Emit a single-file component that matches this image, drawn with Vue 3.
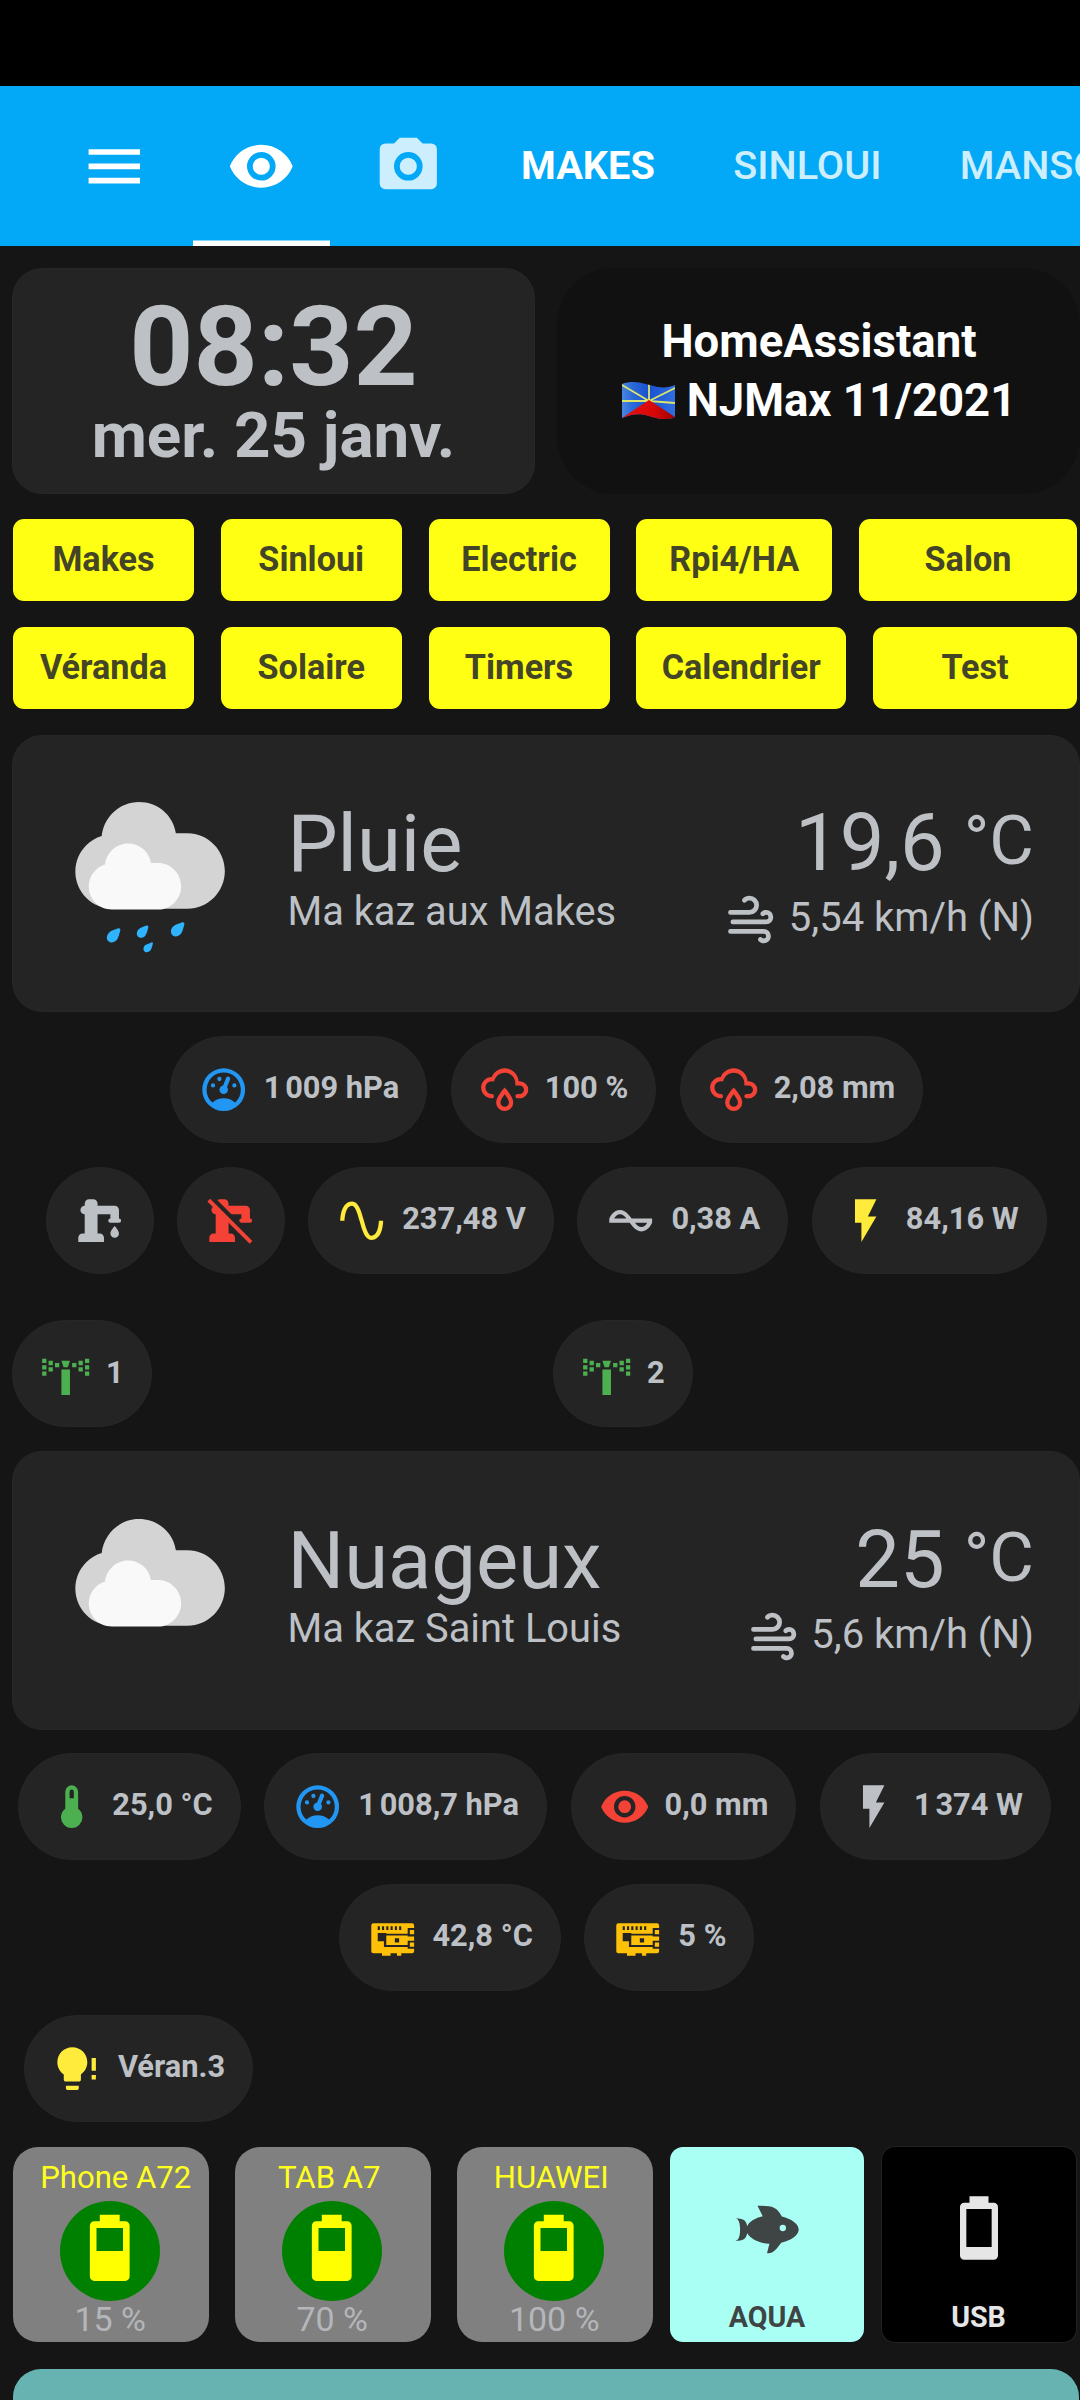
<script setup>
const icons = {
  menu: 'M3,6H21V8H3V6M3,11H21V13H3V11M3,16H21V18H3V16Z',
  eye: 'M12,9A3,3 0 0,0 9,12A3,3 0 0,0 12,15A3,3 0 0,0 15,12A3,3 0 0,0 12,9M12,17A5,5 0 0,1 7,12A5,5 0 0,1 12,7A5,5 0 0,1 17,12A5,5 0 0,1 12,17M12,4.5C7,4.5 2.73,7.61 1,12C2.73,16.39 7,19.5 12,19.5C17,19.5 21.27,16.39 23,12C21.27,7.61 17,4.5 12,4.5Z',
  camera: 'M4,4H7L9,2H15L17,4H20A2,2 0 0,1 22,6V18A2,2 0 0,1 20,20H4A2,2 0 0,1 2,18V6A2,2 0 0,1 4,4M12,7A5,5 0 0,0 7,12A5,5 0 0,0 12,17A5,5 0 0,0 17,12A5,5 0 0,0 12,7M12,9A3,3 0 0,1 15,12A3,3 0 0,1 12,15A3,3 0 0,1 9,12A3,3 0 0,1 12,9Z',
  windy: 'M4,10A1,1 0 0,1 3,9A1,1 0 0,1 4,8H12A2,2 0 0,0 14,6A2,2 0 0,0 12,4C11.45,4 10.95,4.22 10.59,4.59C10.2,5 9.56,5 9.17,4.59C8.78,4.2 8.78,3.56 9.17,3.17C9.9,2.45 10.9,2 12,2A4,4 0 0,1 16,6A4,4 0 0,1 12,10H4M19,12A1,1 0 0,0 20,11A1,1 0 0,0 19,10C18.72,10 18.47,10.11 18.29,10.29C17.9,10.68 17.27,10.68 16.88,10.29C16.5,9.9 16.5,9.27 16.88,8.88C17.42,8.34 18.17,8 19,8A3,3 0 0,1 22,11A3,3 0 0,1 19,14H5A1,1 0 0,1 4,13A1,1 0 0,1 5,12H19M18,18H4A1,1 0 0,1 3,17A1,1 0 0,1 4,16H18A3,3 0 0,1 21,19A3,3 0 0,1 18,22C17.17,22 16.42,21.66 15.88,21.12C15.5,20.73 15.5,20.1 15.88,19.71C16.27,19.32 16.9,19.32 17.29,19.71C17.47,19.89 17.72,20 18,20A1,1 0 0,0 19,19A1,1 0 0,0 18,18Z',
  gauge: 'M12,2A10,10 0 0,0 2,12A10,10 0 0,0 12,22A10,10 0 0,0 22,12A10,10 0 0,0 12,2M12,4A8,8 0 0,1 20,12C20,14.4 19,16.5 17.3,18C15.9,16.7 14,16 12,16C10,16 8.2,16.7 6.7,18C5,16.5 4,14.4 4,12A8,8 0 0,1 12,4M14,5.89C13.62,5.9 13.26,6.15 13.1,6.54L11.81,9.77L11.71,10C11,10.13 10.41,10.6 10.14,11.26C9.73,12.29 10.23,13.45 11.26,13.86C12.29,14.27 13.45,13.77 13.86,12.74C14.12,12.08 14,11.32 13.57,10.76L13.67,10.5L14.96,7.29L14.97,7.26C15.17,6.75 14.92,6.17 14.41,5.96C14.28,5.91 14.15,5.89 14,5.89M10,6A1,1 0 0,0 9,7A1,1 0 0,0 10,8A1,1 0 0,0 11,7A1,1 0 0,0 10,6M7,9A1,1 0 0,0 6,10A1,1 0 0,0 7,11A1,1 0 0,0 8,10A1,1 0 0,0 7,9M17,9A1,1 0 0,0 16,10A1,1 0 0,0 17,11A1,1 0 0,0 18,10A1,1 0 0,0 17,9Z',
  rainy: 'M6,14.03A1,1 0 0,1 7,15.03C7,15.58 6.55,16.03 6,16.03C3.24,16.03 1,13.79 1,11.03C1,8.27 3.24,6.03 6,6.03C7,3.68 9.3,2.03 12,2.03C15.43,2.03 18.24,4.69 18.5,8.06L19,8.03A4,4 0 0,1 23,12.03C23,14.23 21.21,16.03 19,16.03H18C17.45,16.03 17,15.58 17,15.03C17,14.47 17.45,14.03 18,14.03H19A2,2 0 0,0 21,12.03A2,2 0 0,0 19,10.03H17V9.03C17,6.27 14.76,4.03 12,4.03C9.5,4.03 7.45,5.84 7.06,8.21C6.73,8.09 6.37,8.03 6,8.03A3,3 0 0,0 3,11.03A3,3 0 0,0 6,14.03M12,14.15C12.18,14.39 12.37,14.66 12.56,14.94C13,15.56 14,17.03 14,18C14,19.11 13.1,20 12,20A2,2 0 0,1 10,18C10,17.03 11,15.56 11.44,14.94C11.63,14.66 11.82,14.4 12,14.15M12,11.03L11.5,11.59C11.5,11.59 10.65,12.55 9.79,13.81C8.93,15.06 8,16.56 8,18A4,4 0 0,0 12,22A4,4 0 0,0 16,18C16,16.56 15.07,15.06 14.21,13.81C13.35,12.55 12.5,11.59 12.5,11.59L12,11.03Z',
  pump: 'M19,14.5C19,14.5 21,16.67 21,18A2,2 0 0,1 19,20A2,2 0 0,1 17,18C17,16.67 19,14.5 19,14.5M5,18V9A2,2 0 0,1 3,7A2,2 0 0,1 5,5V4A2,2 0 0,1 7,2H9A2,2 0 0,1 11,4V5H19A2,2 0 0,1 21,7V9L21,11A1,1 0 0,1 22,12A1,1 0 0,1 21,13H17A1,1 0 0,1 16,12A1,1 0 0,1 17,11V9H11V18H12A2,2 0 0,1 14,20V22H2V20A2,2 0 0,1 4,18H5Z',
  pumpBody: 'M5,18V9A2,2 0 0,1 3,7A2,2 0 0,1 5,5V4A2,2 0 0,1 7,2H9A2,2 0 0,1 11,4V5H19A2,2 0 0,1 21,7V9L21,11A1,1 0 0,1 22,12A1,1 0 0,1 21,13H17A1,1 0 0,1 16,12A1,1 0 0,1 17,11V9H11V18H12A2,2 0 0,1 14,20V22H2V20A2,2 0 0,1 4,18H5Z',
  sine: 'M16.5,21C13.5,21 12.31,16.76 11.05,12.28C10.14,9.04 9,5 7.5,5C4.11,5 4,11.93 4,12H2C2,11.63 2.06,3 7.5,3C10.5,3 11.71,7.25 12.97,11.74C13.83,14.8 15,19 16.5,19C19.94,19 20.03,12.07 20.03,12H22.03C22.03,12.37 21.97,21 16.5,21Z',
  ac: 'M12.43 11C12.28 10.84 10 7 7 7S2.32 10.18 2 11V13H11.57C11.72 13.16 14 17 17 17S21.68 13.82 22 13V11H12.43M7 9C8.17 9 9.18 9.85 10 11H4.31C4.78 10.17 5.54 9 7 9M17 15C15.83 15 14.82 14.15 14 13H19.69C19.22 13.83 18.46 15 17 15Z',
  flash: 'M7,2V13H10V22L17,10H13L17,2H7Z',
  sprinkler: 'M1,5H3V7H1ZM1,8H3V10H1ZM1,11H3V13H1ZM4,6H6V8H4ZM4,9H6V11H4ZM7,7H9V9H7ZM21,5H23V7H21ZM21,8H23V10H21ZM21,11H23V13H21ZM18,6H20V8H18ZM18,9H20V11H18ZM15,7H17V9H15ZM10,6H14L13,9H11ZM10,10H14V22H10Z',
  thermometer: 'M15 13V5A3 3 0 0 0 9 5V13A5 5 0 1 0 15 13M12 4A1 1 0 0 1 13 5V8H11V5A1 1 0 0 1 12 4Z',
  bulb: 'M9.5 2C5.6 2 2.5 5.1 2.5 9C2.5 11.4 3.7 13.5 5.5 14.7V17C5.5 17.6 5.9 18 6.5 18H12.5C13.1 18 13.5 17.6 13.5 17V14.7C15.3 13.4 16.5 11.3 16.5 9C16.5 5.1 13.4 2 9.5 2M6.5 20V21C6.5 21.6 6.9 22 7.5 22H11.5C12.1 22 12.5 21.6 12.5 21V20H6.5M18.5 7V13H20.5V7H18.5M18.5 15V17H20.5V15H18.5Z',
  board: 'M3,5.3H21A1,1 0 0 1 22,6.3V7.5H19V10.2H9V9.8H5V13.7H7.9V16.4H19V17.2H22V18.3A1,1 0 0 1 21,19.3H16V20.4H14V19.3H11V20.4H7V19.3H3A1,1 0 0 1 2,18.3V6.3A1,1 0 0 1 3,5.3M5,6.7V8.4H6V6.7ZM7,6.7V8.4H8V6.7ZM9,6.7V8.4H10V6.7ZM11,6.7V8.4H12V6.7ZM13,6.7V8.4H14V6.7ZM15,6.7V8.4H16V6.7ZM20,8.4H22V10.4H20ZM20,14.2H22V16.2H20ZM9,11H19V11.4H22V13.4H19V15.4H9ZM13,12.3V14.3H15V12.3Z',
  fish: 'M12,20L12.76,17C9.5,16.79 6.59,15.4 5.75,13.58C5.66,14.06 5.53,14.5 5.33,14.83C4.67,16 3.33,16 2,16C3.1,16 3.5,14.43 3.5,12.5C3.5,10.57 3.1,9 2,9C3.33,9 4.67,9 5.33,10.17C5.53,10.5 5.66,10.94 5.75,11.42C6.4,10 8.32,8.85 10.66,8.32L9,5C11,5 13,5 14.33,5.67C15.46,6.23 16.11,7.27 16.69,8.38C19.61,9.08 22,10.66 22,12.5C22,14.38 19.5,16 16.5,16.66C15.67,17.76 14.86,18.78 14.17,19.33C13.33,20 12.67,20 12,20M17,11A1,1 0 0,0 16,12A1,1 0 0,0 17,13A1,1 0 0,0 18,12A1,1 0 0,0 17,11Z',
  battery50: 'M16,13H8V6H16M16.67,4H15V2H9V4H7.33A1.33,1.33 0 0,0 6,5.33V20.67C6,21.4 6.6,22 7.33,22H16.67A1.33,1.33 0 0,0 18,20.67V5.33C18,4.6 17.4,4 16.67,4Z',
  battery10: 'M16,18H8V6H16M16.67,4H15V2H9V4H7.33A1.33,1.33 0 0,0 6,5.33V20.67C6,21.4 6.6,22 7.33,22H16.67A1.33,1.33 0 0,0 18,20.67V5.33C18,4.6 17.4,4 16.67,4Z',
}

const buttonRows = [
  [
    { label: 'Makes', w: 181 }, { label: 'Sinloui', w: 181 }, { label: 'Electric', w: 181 },
    { label: 'Rpi4/HA', w: 196 }, { label: 'Salon', w: 218 },
  ],
  [
    { label: 'Véranda', w: 181 }, { label: 'Solaire', w: 181 }, { label: 'Timers', w: 181 },
    { label: 'Calendrier', w: 210 }, { label: 'Test', w: 204 },
  ],
]

const chipsMakes = [
  { icon: 'gauge', color: 'blue', text: '1\u202f009 hPa' },
  { icon: 'rainy', color: 'red', text: '100 %' },
  { icon: 'rainy', color: 'red', text: '2,08 mm' },
]
const chipsElectric = [
  { icon: 'pump', color: 'grey' },
  { icon: 'pumpBody', color: 'red', off: true },
  { icon: 'sine', color: 'yellow', text: '237,48 V' },
  { icon: 'ac', color: 'grey', text: '0,38 A' },
  { icon: 'flash', color: 'yellow', text: '84,16 W' },
]
const chipsSprinkler = [
  { icon: 'sprinkler', color: 'green', text: '1' },
  { icon: 'sprinkler', color: 'green', text: '2' },
]
const chipsLouis = [
  { icon: 'thermometer', color: 'green', text: '25,0 °C' },
  { icon: 'gauge', color: 'blue', text: '1\u202f008,7 hPa' },
  { icon: 'eye', color: 'red', text: '0,0 mm' },
  { icon: 'flash', color: 'grey', text: '1\u202f374 W' },
  { icon: 'board', color: 'amber', text: '42,8 °C' },
  { icon: 'board', color: 'amber', text: '5 %' },
]
const chipsVeranda = [{ icon: 'bulb', color: 'yellow', text: 'Véran.3' }]

const chipGroups = {
  top: [
    { name: 'makes', chips: chipsMakes },
    { name: 'electric', chips: chipsElectric },
    { name: 'sprinkler', chips: chipsSprinkler },
  ],
  bottom: [
    { name: 'louis', chips: chipsLouis },
    { name: 'veranda', chips: chipsVeranda },
  ],
}

const sections = [
  { key: 'makes', state: 'Pluie', name: 'Ma kaz aux Makes', temp: '19,6', wind: '5,54 km/h (N)', rain: true, groups: chipGroups.top },
  { key: 'louis', state: 'Nuageux', name: 'Ma kaz Saint Louis', temp: '25', wind: '5,6 km/h (N)', rain: false, groups: chipGroups.bottom },
]

const batteries = [
  { name: 'Phone A72', level: '15 %' },
  { name: 'TAB A7', level: '70 %' },
  { name: 'HUAWEI', level: '100 %' },
]
</script>

<template>
  <div class="app">
    <div class="statusbar"></div>
    <header class="toolbar">
      <svg class="ico-24 menu" viewBox="0 0 24 24"><path :d="icons.menu" /></svg>
      <nav class="tabs">
        <div class="tab active"><svg class="ico-24" viewBox="0 0 24 24"><path :d="icons.eye" /></svg></div>
        <div class="tab dim"><svg class="ico-24" viewBox="0 0 24 24"><path :d="icons.camera" /></svg></div>
        <div class="tab strong">MAKES</div>
        <div class="tab dim">SINLOUI</div>
        <div class="tab dim">MANSON</div>
      </nav>
    </header>

    <main class="view">
      <section class="top-row">
        <div class="card clock">
          <div class="time">08:32</div>
          <div class="date">mer. 25 janv.</div>
        </div>
        <div class="about">
          <div>HomeAssistant</div>
          <div class="about-line">
            <svg class="flag" viewBox="0 0 53 37">
              <defs>
                <clipPath id="flagShape"><path d="M0,2 C14,-3 24,3 36,5 C43,6 48,5 53,3 V35 C45,39 36,37 27,34 C18,31 9,32 0,36 Z" /></clipPath>
                <linearGradient id="flagBlue" x1="0" x2="1">
                  <stop offset="0" stop-color="#4a86e0" /><stop offset=".2" stop-color="#2a6ad8" />
                  <stop offset=".5" stop-color="#1a50d0" /><stop offset="1" stop-color="#2f6fe0" />
                </linearGradient>
                <linearGradient id="flagRed" x1="0" x2="1">
                  <stop offset="0" stop-color="#e81010" /><stop offset=".6" stop-color="#d80808" /><stop offset="1" stop-color="#a00000" />
                </linearGradient>
              </defs>
              <g clip-path="url(#flagShape)">
                <rect width="53" height="37" fill="url(#flagBlue)" />
                <g stroke="#dbe56a" stroke-width="1.8">
                  <path d="M27,19 L0,3 M27,19 L0,19 M27,19 V0 M27,19 L53,6 M27,19 L53,21" />
                </g>
                <path d="M0,36 L27,18 L53,35 V40 H0 Z" fill="url(#flagRed)" />
              </g>
            </svg>
            <span>NJMax 11/2021</span>
          </div>
        </div>
      </section>

      <section class="buttons">
        <div v-for="(row, r) in buttonRows" :key="r" class="button-row">
          <div v-for="b in row" :key="b.label" class="btn" :style="{ width: b.w + 'px' }">{{ b.label }}</div>
        </div>
      </section>

      <template v-for="s in sections" :key="s.key">
        <section class="card weather" :class="s.key">
          <svg class="weather-icon" viewBox="0 0 17 17">
            <path fill="#d4d4d4" d="m3.8863 5.035c-0.54892 0.16898-1.04 0.46637-1.4372 0.8636-0.63077 0.63041-1.0206 1.4933-1.0206 2.455 0 1.9251 1.5589 3.4682 3.4837 3.4682h6.9688c1.9251 0 3.484-1.5981 3.484-3.5232 0-1.9251-1.5589-3.5232-3.484-3.5232h-1.0834c-0.25294-1.6916-1.6986-2.9083-3.4463-2.9083-1.7995 0-3.2805 1.4153-3.465 3.1679z" />
            <path fill="#f9f9f9" d="m4.1996 7.6995c-0.33902 0.10407-0.64276 0.28787-0.88794 0.5334-0.39017 0.38982-0.63147 0.92322-0.63147 1.5176 0 1.1896 0.96414 2.1431 2.1537 2.1431h4.3071c1.1896 0 2.153-0.98742 2.153-2.1777 0-1.1896-0.96344-2.1777-2.153-2.1777h-0.66992c-0.15593-1.0449-1.0499-1.7974-2.1297-1.7974-1.112 0-2.0274 0.87524-2.1417 1.9586z" />
            <g v-if="s.rain" fill="#30b3ff">
              <path id="drop" d="m5.2852 14.734c-0.22401 0.24765-0.57115 0.2988-0.77505 0.11395-0.20391-0.1845-0.18732-0.53481 0.036689-0.78281 0.14817-0.16298 0.59126-0.32914 0.87559-0.42369 0.12453-0.04092 0.22684 0.05186 0.19791 0.17956-0.065617 0.2921-0.18732 0.74965-0.33514 0.91299z" />
              <use href="#drop" transform="translate(5.97 -.57)" />
              <use href="#drop" transform="translate(3.4 1.65) scale(.86)" />
              <use href="#drop" transform="translate(4.72 5.4) scale(.7)" />
            </g>
          </svg>
          <div class="weather-main">
            <div class="state">{{ s.state }}</div>
            <div class="name">{{ s.name }}</div>
          </div>
          <div class="weather-side">
            <div class="temp">{{ s.temp }}<span class="unit">°C</span></div>
            <div class="wind">
              <svg class="ico-20" viewBox="0 0 24 24"><path :d="icons.windy" /></svg>
              <span>{{ s.wind }}</span>
            </div>
          </div>
        </section>

        <div v-for="g in s.groups" :key="g.name" class="chips" :class="g.name">
          <div v-for="(c, i) in g.chips" :key="i" class="chip">
            <svg class="ico-18" :class="c.color" viewBox="0 0 24 24">
              <path fill-rule="evenodd" :d="icons[c.icon]" />
              <template v-if="c.off">
                <path d="M1.8,0 L24,22.2" stroke="#242424" stroke-width="2.2" />
                <path d="M1.75,2.4 L21.5,22.1" stroke="currentColor" stroke-width="1.8" />
              </template>
            </svg>
            <span v-if="c.text" class="chip-text">{{ c.text }}</span>
          </div>
        </div>
      </template>

      <section class="devices">
        <div v-for="b in batteries" :key="b.name" class="device">
          <div class="device-name">{{ b.name }}</div>
          <div class="disc"><svg viewBox="0 0 24 24"><path :d="icons.battery50" /></svg></div>
          <div class="device-level">{{ b.level }}</div>
        </div>
        <div class="tile aqua">
          <svg viewBox="0 0 24 24"><path :d="icons.fish" /></svg>
          <div>AQUA</div>
        </div>
        <div class="tile usb">
          <svg viewBox="0 0 24 24"><path :d="icons.battery10" /></svg>
          <div>USB</div>
        </div>
      </section>

      <div class="teal"></div>
    </main>
  </div>
</template>

<style>
body { background: #151515; }
</style>

<style scoped>
.app {
  width: 1080px;
  height: 2400px;
  overflow: hidden;
  display: flex;
  flex-direction: column;
  background: #151515;
  color: #bdc1c6;
  font-family: Roboto, "Liberation Sans", sans-serif;
}
.app * { box-sizing: border-box; }
svg { display: block; fill: currentColor; flex: none; }
.ico-24 { width: 68.6px; height: 68.6px; }
.ico-20 { width: 57px; height: 57px; }
.ico-18 { width: 51.4px; height: 51.4px; }

.statusbar { height: 86px; background: #000; flex: none; }
.toolbar {
  height: 160px;
  flex: none;
  display: flex;
  align-items: center;
  padding-left: 80px;
  background: #03a9f6;
  color: #fff;
}
.tabs { display: flex; align-self: stretch; margin-left: 44.4px; gap: 10px; }
.tab {
  display: flex;
  align-items: center;
  flex: none;
  padding: 0 34.2px;
  font-size: 39.7px;
  font-weight: 500;
  line-height: 1;
}
.tab.active { box-shadow: inset 0 -5.5px 0 #fff; }
.tab.strong { font-weight: 700; }
.tab.dim { color: #cdeefd; }

.view { display: flex; flex-direction: column; padding: 22px 0 0 12px; flex: none; }
.card { background: #242424; border: 1px solid #272727; border-radius: 30px; }
.top-row { display: flex; gap: 22px; height: 226px; }
.clock { width: 523px; text-align: center; font-weight: 700; padding-top: 22px; }
.time { font-size: 112px; line-height: 112px; }
.date { font-size: 63.7px; line-height: 76px; margin-top: -5px; }
.about {
  flex: 1;
  background: #111;
  border-radius: 57px;
  color: #fff;
  font-size: 45.5px;
  font-weight: 700;
  line-height: 59px;
  text-align: center;
  padding: 44px 0 0 1px;
}
.about-line { display: flex; justify-content: center; align-items: center; gap: 12px; }
.flag { width: 53px; height: 37px; }

.buttons { display: flex; flex-direction: column; gap: 26px; margin: 25px 3px 0 1px; }
.button-row { display: flex; justify-content: space-between; height: 82px; }
.btn {
  display: flex;
  align-items: center;
  justify-content: center;
  background: #ffff14;
  border-radius: 11px;
  color: #444426;
  font-size: 34.2px;
  font-weight: 700;
  padding-bottom: 2px;
}

.weather { display: flex; align-items: center; padding: 0 45px 0 47px; margin-top: 25.5px; height: 277.5px; }
.weather.louis { margin-top: 23.5px; height: 279.5px; }
.weather-icon { width: 182.4px; height: 182.4px; }
.weather-main { margin-left: 45px; flex: 1; padding-bottom: 11px; }
.state { font-size: 79.6px; line-height: 88px; }
.name { font-size: 39.8px; line-height: 48px; }
.weather-side { display: flex; flex-direction: column; align-items: flex-end; }
.temp { font-size: 79.5px; line-height: 88px; display: flex; }
.unit { font-size: 68.6px; line-height: 84px; margin-left: 19px; }
.wind { display: flex; align-items: center; gap: 10.5px; font-size: 40px; line-height: 57px; padding-top: 1px; }
.wind svg { margin-top: 3px; }

.chips { display: flex; flex-wrap: wrap; justify-content: center; row-gap: 23.5px; }
.chip {
  display: flex;
  align-items: center;
  height: 107.5px;
  padding: 0 27px;
  margin-right: 23.6px;
  background: #242424;
  border: 1px solid #272727;
  border-radius: 55px;
}
.chip:last-child { margin-right: 0; }
.chip-text { font-size: 30.8px; font-weight: 700; line-height: 50px; margin-left: 14.5px; padding-bottom: 2px; white-space: nowrap; }
.makes.chips { margin-top: 23.5px; padding-left: 1px; }
.electric { margin-top: 23.5px; padding-left: 1px; }
.sprinkler { display: grid; grid-template-columns: 541px 1fr; justify-items: start; margin-top: 46px; }
.sprinkler .chip { height: 107px; }
.louis.chips { margin-top: 22.5px; padding-left: 1px; }
.veranda { margin-top: 23.5px; justify-content: flex-start; padding-left: 12px; }

.blue { color: #2196f3; }
.red { color: #f44336; }
.grey { color: #bdc1c6; }
.yellow { color: #ffeb3b; }
.green { color: #4caf50; }
.amber { color: #ffc107; }

.devices { display: flex; margin: 24.5px 0 0 1px; height: 195px; }
.device {
  width: 195.5px;
  margin-right: 26.5px;
  border-radius: 25px;
  background: #808080;
  display: flex;
  flex-direction: column;
  align-items: center;
}
.device:nth-child(3) { margin-right: 17.5px; }
.device-name { color: #ffff1e; font-size: 31.1px; line-height: 36px; margin-top: 13px; padding-left: 10px; white-space: nowrap; }
.device:nth-child(n + 2) .device-name { padding: 0 7px 0 0; }
.disc {
  width: 100px;
  height: 100px;
  margin: 5.5px 2px 0 0;
  border-radius: 50%;
  background: #008000;
  color: #ff0;
  display: flex;
  justify-content: center;
}
.disc svg { width: 79.5px; height: 79.5px; margin-top: 7px; }
.device-level { color: #b4b6ba; font-size: 34px; line-height: 36px; margin-top: 0; padding-right: 1px; }
.tile {
  width: 194px;
  border-radius: 13px;
  display: flex;
  flex-direction: column;
  align-items: center;
  font-size: 28.6px;
  font-weight: 700;
}
.tile svg { width: 76px; height: 76px; margin: 43px 0 34px; }
.tile div { line-height: 34px; }
.aqua { background: #aafff5; color: #3f4444; margin-right: 17.5px; }
.usb { background: #000; color: #e6e6e6; box-shadow: 0 0 0 1px #222; }

.teal { height: 60px; margin: 27px 1px 0 1px; border-radius: 28px 28px 0 0; background: #66b3b1; }
</style>
